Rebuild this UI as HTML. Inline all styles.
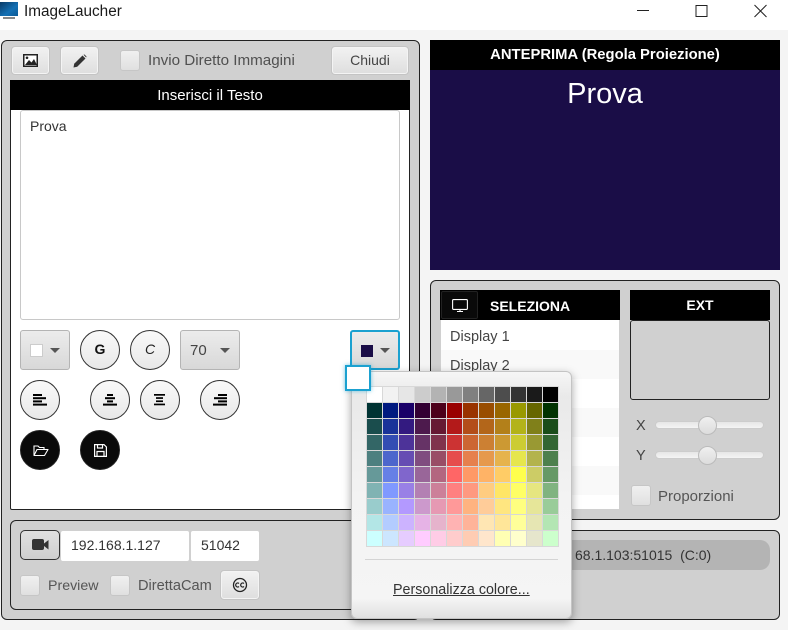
<!DOCTYPE html>
<html><head><meta charset="utf-8"><title>ImageLaucher</title>
<style>
html,body{margin:0;padding:0;width:788px;height:630px;overflow:hidden;background:#f4f4f4;font-family:"Liberation Sans",sans-serif;font-size:14px;color:#333}
div,span,svg{position:absolute;box-sizing:border-box;white-space:nowrap}
.panel{background:#d0d0d0;border:1px solid #222;border-radius:6px}
.btn{background:linear-gradient(#f2f2f2,#dedede);border:1px solid #c4c4c4;border-radius:4px;box-shadow:inset 0 0 0 1px #f4f4f4}
.cb{background:linear-gradient(#f0f0f0,#e0e0e0);border:1px solid #c6c6c6;border-radius:3px;width:20px;height:21px}
.circ{width:40px;height:40px;border-radius:50%;background:linear-gradient(#f9f9f9,#e8e8e8);border:1.5px solid #333}
.dark{width:40px;height:40px;border-radius:50%;background:#0a0a0a;border:1px solid #222}
.combo{background:linear-gradient(#ececec,#d8d8d8);border:1px solid #b4b4b4;border-radius:3px;height:40px;top:330px}
.arr{width:0;height:0;border-left:5px solid transparent;border-right:5px solid transparent;border-top:5px solid #555}
.blk{background:#000;color:#fff;text-align:center;font-weight:bold;height:30px;line-height:31px}
.t{line-height:18px;color:#444}
.thumb{width:19px;height:19px;border-radius:50%;background:linear-gradient(#f0f0f0,#dcdcdc);border:1px solid #bbb}
.track{left:655px;width:109px;height:8px;border-radius:4px;background:linear-gradient(#e6e6e6,#f4f4f4);border:1px solid #ccc}
.field{background:#fff;border-radius:2px;height:30px;line-height:29px;padding-left:10px;color:#333}
</style></head><body>
<!-- title bar -->
<div style="left:0;top:0;width:788px;height:30px;background:#fff"></div>
<svg style="left:0;top:2px" width="20" height="20" viewBox="0 0 20 20"><defs><linearGradient id="g" x1="0" y1="0" x2="1" y2="1"><stop offset="0" stop-color="#0a3a66"/><stop offset=".6" stop-color="#1470b4"/><stop offset="1" stop-color="#0c5a96"/></linearGradient></defs><rect x="0" y="0" width="18" height="14" fill="url(#g)"/><rect x="3" y="15" width="12" height="2" fill="#888"/></svg>
<div style="left:24px;top:2px;font-size:15.3px;line-height:20px;color:#1a1a1a">ImageLaucher</div>
<svg style="left:630px;top:0" width="150" height="24" viewBox="0 0 150 24" fill="none" stroke="#222" stroke-width="1"><path d="M7 10.5H19"/><rect x="66" y="5.5" width="11" height="11"/><path d="M124.500 5L136.500 17M136.500 5L124.500 17"/></svg>

<!-- left panel -->
<div class="panel" style="left:1px;top:40px;width:419px;height:580px"></div>
<div class="btn" style="left:11px;top:46px;width:39px;height:29px"></div>
<svg style="left:23px;top:54px" width="16" height="14" viewBox="0 0 16 14"><rect x=".75" y=".75" width="13.500" height="11.500" fill="#fff" stroke="#222" stroke-width="1.500"/><path d="M2 11L6 6l2.500 2.500L11 5l3 6z" fill="#222"/><circle cx="4" cy="3.800" r="1.300" fill="#222"/></svg>
<div class="btn" style="left:60px;top:46px;width:39px;height:29px"></div>
<svg style="left:73px;top:54px" width="14" height="14" viewBox="0 0 14 14"><path d="M0.500 13.500L1.200 9.800 9.500 1.500 12.500 4.500 4.200 12.800z" fill="#333"/><path d="M10.500 .8l1-.3 2 2-.3 1z" fill="#333"/></svg>
<div class="cb" style="left:120px;top:50px"></div>
<div class="t" style="left:148px;top:52px;font-size:15.2px;color:#505050">Invio Diretto Immagini</div>
<div class="btn" style="left:331px;top:46px;width:78px;height:29px;text-align:center;line-height:27px;font-size:14px;color:#444">Chiudi</div>

<!-- text area box -->
<div style="left:10px;top:80px;width:400px;height:430px;background:#fff;border:1px solid #222;border-radius:2px"></div>
<div class="blk" style="left:10px;top:80px;width:400px;font-weight:normal;font-size:15px">Inserisci il Testo</div>
<div style="left:20px;top:110px;width:380px;height:210px;background:#fff;border:1px solid #c8c8c8;border-radius:3px"></div>
<div class="t" style="left:30px;top:117px;font-size:14px;color:#333">Prova</div>

<!-- controls row 1 -->
<div class="combo" style="left:20px;width:50px"></div>
<div style="left:30px;top:344px;width:13px;height:13px;background:#fff;border:1px solid #ccc"></div>
<div class="arr" style="left:50px;top:348px"></div>
<div class="circ" style="left:80px;top:330px;text-align:center;line-height:37px;font-weight:bold;font-size:14px;color:#111">G</div>
<div class="circ" style="left:130px;top:330px;text-align:center;line-height:37px;font-style:italic;font-size:14px;color:#222">C</div>
<div class="combo" style="left:180px;width:60px"></div>
<div class="t" style="left:190px;top:342px;font-size:15px">70</div>
<div class="arr" style="left:220px;top:348px"></div>
<div class="combo" style="left:350px;width:50px;border:2px solid #1ba1d0"></div>
<div style="left:361px;top:345px;width:12px;height:12px;background:#1a0d47"></div>
<div class="arr" style="left:380px;top:348px"></div>

<!-- align -->
<div class="circ" style="left:20px;top:380px"></div>
<svg style="left:33px;top:394px" width="15" height="12" viewBox="0 0 15 12" fill="#000"><rect x="0" y="0" width="9" height="2"/><rect x="0" y="3.200" width="13" height="2"/><rect x="0" y="6.400" width="9" height="2"/><rect x="0" y="9.600" width="14" height="2"/></svg>
<div class="circ" style="left:90px;top:380px"></div>
<svg style="left:103px;top:394px" width="15" height="12" viewBox="0 0 15 12" fill="#000"><rect x="4" y="0" width="6" height="2"/><rect x="2" y="3.200" width="10" height="2"/><rect x="4" y="6.400" width="6" height="2"/><rect x="0" y="9.600" width="14" height="2"/></svg>
<div class="circ" style="left:140px;top:380px"></div>
<svg style="left:154px;top:394px" width="13" height="12" viewBox="0 0 13 12" fill="#000"><rect x="0" y="0" width="11" height="1.700"/><rect x="2" y="3.200" width="7" height="1.700"/><rect x="2" y="6.400" width="7" height="1.700"/><rect x="0" y="9.600" width="11" height="1.700"/></svg>
<div class="circ" style="left:200px;top:380px"></div>
<svg style="left:213px;top:394px" width="15" height="12" viewBox="0 0 15 12" fill="#000"><rect x="5" y="0" width="9" height="2"/><rect x="1" y="3.200" width="13" height="2"/><rect x="5" y="6.400" width="9" height="2"/><rect x="0" y="9.600" width="14" height="2"/></svg>

<!-- dark -->
<div class="dark" style="left:20px;top:430px"></div>
<svg style="left:33px;top:444px" width="16" height="13" viewBox="0 0 16 13" fill="none" stroke="#fff" stroke-width="1.100"><path d="M1 11V2h4l1.500 1.500H11V5.500"/><path d="M1 11.500H11.500L15 5.500H4z" stroke-linejoin="round"/></svg>
<div class="dark" style="left:80px;top:430px"></div>
<svg style="left:94px;top:444px" width="13" height="13" viewBox="0 0 13 13" fill="none" stroke="#fff" stroke-width="1.200"><path d="M.6.600H10L12.400 3V12.400H.6z"/><path d="M3.500 .8V4H8.500V.8M3 12V7.500H10V12"/></svg>

<!-- bottom left panel -->
<div class="panel" style="left:10px;top:520px;width:410px;height:90px"></div>
<div style="left:20px;top:530px;width:40px;height:30px;border:1px solid #333;border-radius:5px;background:linear-gradient(#e0e0e0,#cfcfcf)"></div>
<svg style="left:32px;top:539px" width="18" height="12" viewBox="0 0 18 12" fill="#333"><rect x="0" y="0" width="12" height="11" rx="2"/><path d="M12 4.500L16.500 1V10.500L12 7z"/></svg>
<div class="field" style="left:61px;top:531px;width:128px;font-size:14px">192.168.1.127</div>
<div class="field" style="left:191px;top:531px;width:68px;font-size:14px">51042</div>
<div class="cb" style="left:20px;top:575px"></div>
<div class="t" style="left:48px;top:577px;font-size:14.2px;color:#555">Preview</div>
<div class="cb" style="left:110px;top:575px"></div>
<div class="t" style="left:138px;top:577px;font-size:14.6px;color:#555">DirettaCam</div>
<div class="btn" style="left:220px;top:570px;width:40px;height:30px"></div>
<svg style="left:232px;top:577px" width="16" height="16" viewBox="0 0 16 16" fill="none" stroke="#222" stroke-width="1.300"><circle cx="8" cy="8" r="6.500"/><path d="M7 6.500a2 2 0 1 0 0 3M12 6.500a2 2 0 1 0 0 3" stroke-width="1.200"/></svg>

<!-- preview -->
<div class="blk" style="left:430px;top:40px;width:350px;font-size:14.8px">ANTEPRIMA (Regola Proiezione)</div>
<div style="left:430px;top:70px;width:350px;height:200px;background:#1a0d47"></div>
<div style="left:430px;top:75px;width:350px;text-align:center;color:#fff;font-size:29px;line-height:38px">Prova</div>

<!-- right select panel -->
<div class="panel" style="left:430px;top:280px;width:350px;height:240px"></div>
<div class="blk" style="left:440px;top:290px;width:180px"></div>
<div style="left:441px;top:291px;width:37px;height:28px;background:#0a0a0a;border:1px solid #222;border-radius:2px"></div>
<svg style="left:452px;top:299px" width="16" height="14" viewBox="0 0 16 14" fill="none" stroke="#fff" stroke-width="1.100"><rect x=".6" y=".6" width="14.800" height="9.800" rx="1"/><path d="M5 12.500H11M8 10.500V12.500"/></svg>
<div style="left:490px;top:298px;color:#fff;font-weight:bold;font-size:14px;line-height:16px">SELEZIONA</div>
<div style="left:441px;top:320px;width:178px;height:30px;background:#fff"></div>
<div style="left:441px;top:350px;width:178px;height:29px;background:#f9f9f9"></div>
<div style="left:441px;top:379px;width:178px;height:29px;background:#fff"></div>
<div style="left:441px;top:408px;width:178px;height:29px;background:#f9f9f9"></div>
<div style="left:441px;top:437px;width:178px;height:29px;background:#fff"></div>
<div style="left:441px;top:466px;width:178px;height:29px;background:#f9f9f9"></div>
<div style="left:441px;top:495px;width:178px;height:14px;background:#fff"></div>
<div class="t" style="left:450px;top:328px;font-size:14.500px">Display 1</div>
<div class="t" style="left:450px;top:357px;font-size:14.500px">Display 2</div>
<div class="blk" style="left:630px;top:290px;width:140px;font-size:14px">EXT</div>
<div style="left:630px;top:320px;width:140px;height:80px;background:#d0d0d0;border:1px solid #222;border-radius:3px"></div>
<div class="t" style="left:636px;top:417px;font-size:14.500px">X</div>
<div class="track" style="top:421px"></div>
<div class="thumb" style="left:698px;top:416px"></div>
<div class="t" style="left:636px;top:447px;font-size:14.500px">Y</div>
<div class="track" style="top:451px"></div>
<div class="thumb" style="left:698px;top:446px"></div>
<div class="cb" style="left:631px;top:485px;height:21px"></div>
<div class="t" style="left:658px;top:488px;font-size:15px;color:#555">Proporzioni</div>

<!-- right bottom -->
<div class="panel" style="left:430px;top:530px;width:350px;height:90px"></div>
<div style="left:440px;top:540px;width:330px;height:30px;border-radius:10px;background:#b4b4b4"></div>
<div class="t" style="left:575px;top:546px;font-size:14px;color:#333;white-space:pre">68.1.103:51015  (C:0)</div>

<!-- popup -->
<div style="left:351px;top:371px;width:221px;height:248px;border-radius:6px;background:linear-gradient(#f6f6f6 0,#e9e9e9 10%,#f3f3f3 50%,#f5f5f5 92%,#e0e0e0 100%);border:1px solid #c4c4c4;box-shadow:0 3px 9px rgba(0,0,0,.35)"></div>
<svg style="left:366px;top:386px" width="193" height="161" viewBox="0 0 193 161" shape-rendering="crispEdges">
<rect width="193" height="161" fill="#d8d8d8"/>
<g><rect x="1" y="1" width="15" height="15" fill="rgb(255,255,255)"/><rect x="17" y="1" width="15" height="15" fill="rgb(242,242,242)"/><rect x="33" y="1" width="15" height="15" fill="rgb(230,230,230)"/><rect x="49" y="1" width="15" height="15" fill="rgb(204,204,204)"/><rect x="65" y="1" width="15" height="15" fill="rgb(179,179,179)"/><rect x="81" y="1" width="15" height="15" fill="rgb(153,153,153)"/><rect x="97" y="1" width="15" height="15" fill="rgb(128,128,128)"/><rect x="113" y="1" width="15" height="15" fill="rgb(102,102,102)"/><rect x="129" y="1" width="15" height="15" fill="rgb(77,77,77)"/><rect x="145" y="1" width="15" height="15" fill="rgb(51,51,51)"/><rect x="161" y="1" width="15" height="15" fill="rgb(26,26,26)"/><rect x="177" y="1" width="15" height="15" fill="rgb(0,0,0)"/></g>
<g><rect x="1" y="17" width="15" height="15" fill="rgb(0,51,51)"/><rect x="17" y="17" width="15" height="15" fill="rgb(0,26,128)"/><rect x="33" y="17" width="15" height="15" fill="rgb(26,0,104)"/><rect x="49" y="17" width="15" height="15" fill="rgb(51,0,51)"/><rect x="65" y="17" width="15" height="15" fill="rgb(77,0,26)"/><rect x="81" y="17" width="15" height="15" fill="rgb(153,0,0)"/><rect x="97" y="17" width="15" height="15" fill="rgb(153,51,0)"/><rect x="113" y="17" width="15" height="15" fill="rgb(153,77,0)"/><rect x="129" y="17" width="15" height="15" fill="rgb(153,102,0)"/><rect x="145" y="17" width="15" height="15" fill="rgb(153,153,0)"/><rect x="161" y="17" width="15" height="15" fill="rgb(102,102,0)"/><rect x="177" y="17" width="15" height="15" fill="rgb(0,51,0)"/></g>
<g><rect x="1" y="33" width="15" height="15" fill="rgb(26,77,77)"/><rect x="17" y="33" width="15" height="15" fill="rgb(26,51,153)"/><rect x="33" y="33" width="15" height="15" fill="rgb(51,26,128)"/><rect x="49" y="33" width="15" height="15" fill="rgb(77,26,77)"/><rect x="65" y="33" width="15" height="15" fill="rgb(102,26,51)"/><rect x="81" y="33" width="15" height="15" fill="rgb(179,26,26)"/><rect x="97" y="33" width="15" height="15" fill="rgb(179,77,26)"/><rect x="113" y="33" width="15" height="15" fill="rgb(179,102,26)"/><rect x="129" y="33" width="15" height="15" fill="rgb(179,128,26)"/><rect x="145" y="33" width="15" height="15" fill="rgb(179,179,26)"/><rect x="161" y="33" width="15" height="15" fill="rgb(128,128,26)"/><rect x="177" y="33" width="15" height="15" fill="rgb(26,77,26)"/></g>
<g><rect x="1" y="49" width="15" height="15" fill="rgb(51,102,102)"/><rect x="17" y="49" width="15" height="15" fill="rgb(51,77,179)"/><rect x="33" y="49" width="15" height="15" fill="rgb(77,51,153)"/><rect x="49" y="49" width="15" height="15" fill="rgb(102,51,102)"/><rect x="65" y="49" width="15" height="15" fill="rgb(128,51,77)"/><rect x="81" y="49" width="15" height="15" fill="rgb(204,51,51)"/><rect x="97" y="49" width="15" height="15" fill="rgb(204,102,51)"/><rect x="113" y="49" width="15" height="15" fill="rgb(204,128,51)"/><rect x="129" y="49" width="15" height="15" fill="rgb(204,153,51)"/><rect x="145" y="49" width="15" height="15" fill="rgb(204,204,51)"/><rect x="161" y="49" width="15" height="15" fill="rgb(153,153,51)"/><rect x="177" y="49" width="15" height="15" fill="rgb(51,102,51)"/></g>
<g><rect x="1" y="65" width="15" height="15" fill="rgb(77,128,128)"/><rect x="17" y="65" width="15" height="15" fill="rgb(77,102,204)"/><rect x="33" y="65" width="15" height="15" fill="rgb(102,77,179)"/><rect x="49" y="65" width="15" height="15" fill="rgb(128,77,128)"/><rect x="65" y="65" width="15" height="15" fill="rgb(153,77,102)"/><rect x="81" y="65" width="15" height="15" fill="rgb(230,77,77)"/><rect x="97" y="65" width="15" height="15" fill="rgb(230,128,77)"/><rect x="113" y="65" width="15" height="15" fill="rgb(230,153,77)"/><rect x="129" y="65" width="15" height="15" fill="rgb(230,179,77)"/><rect x="145" y="65" width="15" height="15" fill="rgb(230,230,77)"/><rect x="161" y="65" width="15" height="15" fill="rgb(179,179,77)"/><rect x="177" y="65" width="15" height="15" fill="rgb(77,128,77)"/></g>
<g><rect x="1" y="81" width="15" height="15" fill="rgb(102,153,153)"/><rect x="17" y="81" width="15" height="15" fill="rgb(102,128,230)"/><rect x="33" y="81" width="15" height="15" fill="rgb(128,102,204)"/><rect x="49" y="81" width="15" height="15" fill="rgb(153,102,153)"/><rect x="65" y="81" width="15" height="15" fill="rgb(179,102,128)"/><rect x="81" y="81" width="15" height="15" fill="rgb(255,102,102)"/><rect x="97" y="81" width="15" height="15" fill="rgb(255,153,102)"/><rect x="113" y="81" width="15" height="15" fill="rgb(255,179,102)"/><rect x="129" y="81" width="15" height="15" fill="rgb(255,204,102)"/><rect x="145" y="81" width="15" height="15" fill="rgb(255,255,77)"/><rect x="161" y="81" width="15" height="15" fill="rgb(204,204,102)"/><rect x="177" y="81" width="15" height="15" fill="rgb(102,153,102)"/></g>
<g><rect x="1" y="97" width="15" height="15" fill="rgb(128,179,179)"/><rect x="17" y="97" width="15" height="15" fill="rgb(128,153,255)"/><rect x="33" y="97" width="15" height="15" fill="rgb(153,128,230)"/><rect x="49" y="97" width="15" height="15" fill="rgb(179,128,179)"/><rect x="65" y="97" width="15" height="15" fill="rgb(204,128,153)"/><rect x="81" y="97" width="15" height="15" fill="rgb(255,128,128)"/><rect x="97" y="97" width="15" height="15" fill="rgb(255,153,128)"/><rect x="113" y="97" width="15" height="15" fill="rgb(255,204,128)"/><rect x="129" y="97" width="15" height="15" fill="rgb(255,230,102)"/><rect x="145" y="97" width="15" height="15" fill="rgb(255,255,102)"/><rect x="161" y="97" width="15" height="15" fill="rgb(230,230,128)"/><rect x="177" y="97" width="15" height="15" fill="rgb(128,179,128)"/></g>
<g><rect x="1" y="113" width="15" height="15" fill="rgb(153,204,204)"/><rect x="17" y="113" width="15" height="15" fill="rgb(153,179,255)"/><rect x="33" y="113" width="15" height="15" fill="rgb(179,153,255)"/><rect x="49" y="113" width="15" height="15" fill="rgb(204,153,204)"/><rect x="65" y="113" width="15" height="15" fill="rgb(230,153,179)"/><rect x="81" y="113" width="15" height="15" fill="rgb(255,153,153)"/><rect x="97" y="113" width="15" height="15" fill="rgb(255,179,128)"/><rect x="113" y="113" width="15" height="15" fill="rgb(255,204,153)"/><rect x="129" y="113" width="15" height="15" fill="rgb(255,230,128)"/><rect x="145" y="113" width="15" height="15" fill="rgb(255,255,128)"/><rect x="161" y="113" width="15" height="15" fill="rgb(230,230,153)"/><rect x="177" y="113" width="15" height="15" fill="rgb(153,204,153)"/></g>
<g><rect x="1" y="129" width="15" height="15" fill="rgb(179,230,230)"/><rect x="17" y="129" width="15" height="15" fill="rgb(179,204,255)"/><rect x="33" y="129" width="15" height="15" fill="rgb(204,179,255)"/><rect x="49" y="129" width="15" height="15" fill="rgb(230,179,230)"/><rect x="65" y="129" width="15" height="15" fill="rgb(230,179,204)"/><rect x="81" y="129" width="15" height="15" fill="rgb(255,179,179)"/><rect x="97" y="129" width="15" height="15" fill="rgb(255,179,153)"/><rect x="113" y="129" width="15" height="15" fill="rgb(255,230,179)"/><rect x="129" y="129" width="15" height="15" fill="rgb(255,230,153)"/><rect x="145" y="129" width="15" height="15" fill="rgb(255,255,153)"/><rect x="161" y="129" width="15" height="15" fill="rgb(230,230,179)"/><rect x="177" y="129" width="15" height="15" fill="rgb(179,230,179)"/></g>
<g><rect x="1" y="145" width="15" height="15" fill="rgb(204,255,255)"/><rect x="17" y="145" width="15" height="15" fill="rgb(204,230,255)"/><rect x="33" y="145" width="15" height="15" fill="rgb(230,204,255)"/><rect x="49" y="145" width="15" height="15" fill="rgb(255,204,255)"/><rect x="65" y="145" width="15" height="15" fill="rgb(255,204,230)"/><rect x="81" y="145" width="15" height="15" fill="rgb(255,204,204)"/><rect x="97" y="145" width="15" height="15" fill="rgb(255,204,179)"/><rect x="113" y="145" width="15" height="15" fill="rgb(255,230,204)"/><rect x="129" y="145" width="15" height="15" fill="rgb(255,255,179)"/><rect x="145" y="145" width="15" height="15" fill="rgb(255,255,204)"/><rect x="161" y="145" width="15" height="15" fill="rgb(230,230,204)"/><rect x="177" y="145" width="15" height="15" fill="rgb(204,255,204)"/></g>
</svg>
<div style="left:365px;top:559px;width:193px;height:1px;background:#d4d4d4"></div>
<div style="left:393px;top:581px;font-size:14.3px;line-height:18px;color:#333;text-decoration:underline">Personalizza colore...</div>
<div style="left:345px;top:365px;width:26px;height:26px;background:#fff;border:2px solid #1ba1d0;box-shadow:0 0 4px rgba(27,161,208,.6)"></div>
</body></html>
